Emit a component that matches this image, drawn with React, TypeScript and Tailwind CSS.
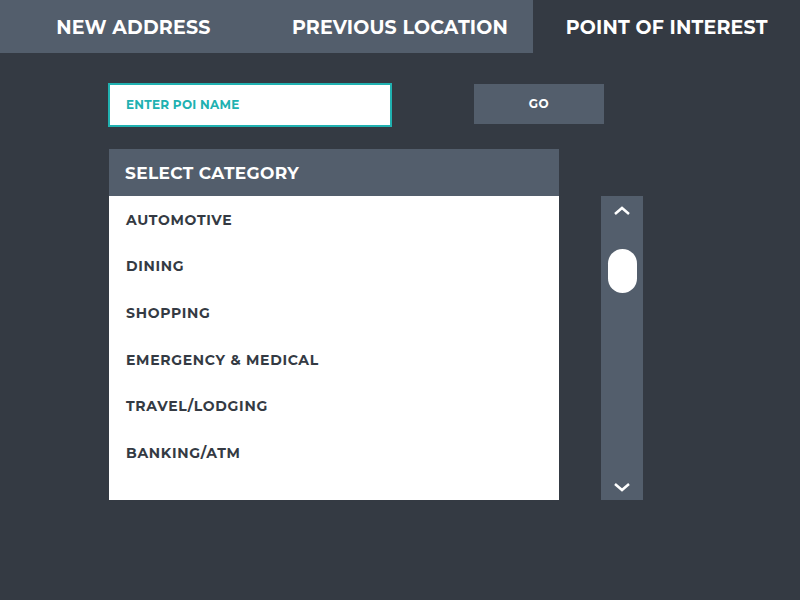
import React, { useState } from 'react';

const categories = [
  'AUTOMOTIVE',
  'DINING',
  'SHOPPING',
  'EMERGENCY & MEDICAL',
  'TRAVEL/LODGING',
  'BANKING/ATM',
];

const tabs = ['NEW ADDRESS', 'PREVIOUS LOCATION', 'POINT OF INTEREST'];

export default function App() {
  const [active, setActive] = useState(2);

  return (
    <div className="w-[800px] h-[600px] bg-[#343a43] font-['Montserrat','Open_Sans',sans-serif] overflow-hidden">
      {/* Tabs */}
      <div className="grid grid-cols-3 h-[53px] bg-[#535e6c]">
        {tabs.map((t, i) => (
          <button
            key={t}
            onClick={() => setActive(i)}
            className={`flex items-center justify-center pt-[3px] text-[19px] font-bold text-white tracking-[0.01em] ${
              active === i ? 'bg-[#343a43]' : 'bg-[#535e6c]'
            }`}
          >
            {t}
          </button>
        ))}
      </div>

      {/* Search row */}
      <div className="flex items-start pl-[108px] pt-[30px]">
        <div className="w-[284px] h-[44px] border-2 border-[#20b1b1] bg-white flex items-center px-4">
          <input
            placeholder="ENTER POI NAME"
            className="w-full outline-none text-[12px] font-bold tracking-[0.02em] text-[#20b1b1] placeholder:text-[#20b1b1]"
          />
        </div>
        <button className="ml-[82px] mt-[1px] w-[130px] h-[40px] bg-[#535e6c] text-white text-[12px] font-bold tracking-[0.05em]">
          GO
        </button>
      </div>

      {/* Category list + scrollbar */}
      <div className="flex pl-[109px] pt-[22px]">
        <div className="w-[450px]">
          <div className="h-[47px] bg-[#535e6c] flex items-center px-4 pt-[2px] text-white text-[17px] font-bold tracking-[0.02em]">
            SELECT CATEGORY
          </div>
          <div className="h-[304px] bg-white pt-[1px]">
            {categories.map((c) => (
              <div
                key={c}
                className="h-[46.6px] flex items-center pl-[17px] text-[14px] font-bold tracking-[0.05em] text-[#343a43]"
              >
                {c}
              </div>
            ))}
          </div>
        </div>

        <div className="ml-[42px] mt-[47px] w-[42px] h-[304px] bg-[#535e6c] flex flex-col items-center">
          <svg width="18" height="10" viewBox="0 0 18 10" className="mt-[10px]">
            <path d="M2 8 L9 2 L16 8" stroke="white" strokeWidth="2.5" fill="none" />
          </svg>
          <div className="mt-[33px] w-[29px] h-[44px] rounded-full bg-white" />
          <div className="flex-1" />
          <svg width="18" height="10" viewBox="0 0 18 10" className="mb-[8px]">
            <path d="M2 2 L9 8 L16 2" stroke="white" strokeWidth="2.5" fill="none" />
          </svg>
        </div>
      </div>
    </div>
  );
}
